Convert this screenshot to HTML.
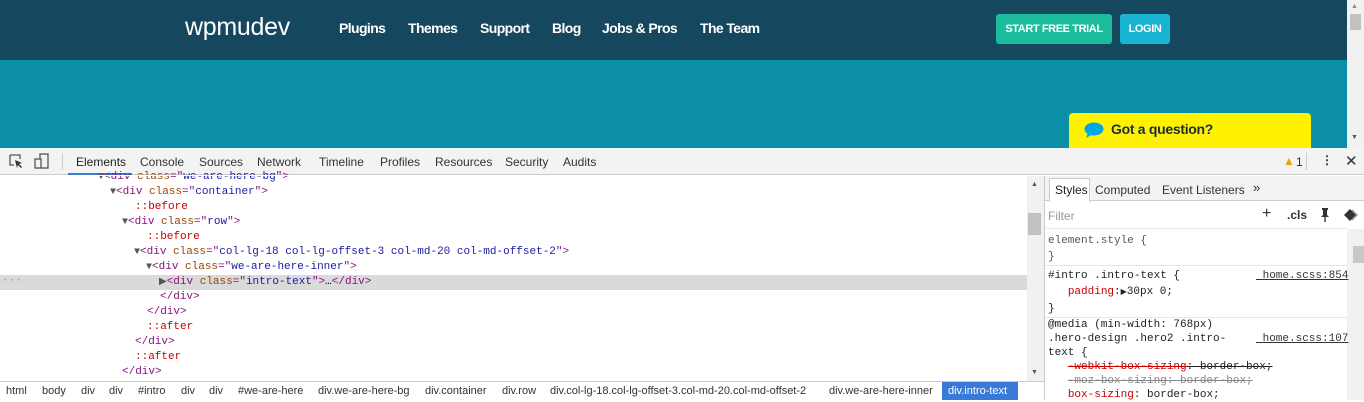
<!DOCTYPE html>
<html><head><style>
*{margin:0;padding:0;box-sizing:border-box}
body{width:1364px;height:400px;overflow:hidden;position:relative;font-family:"Liberation Sans",sans-serif;background:#fff}
.a{position:absolute;white-space:nowrap}
.nav{top:0;left:0;width:1347px;height:60px;background:#15475e}
.hero{top:60px;left:0;width:1347px;height:88px;background:#0a8fa6}
.nl{color:#fff;font-weight:bold;font-size:14px;top:20px;letter-spacing:-0.6px}
.btn{top:14px;height:30px;border-radius:3px;color:#fff;font-weight:bold;font-size:11px;line-height:30px;text-align:center;letter-spacing:-0.4px}
.m{font-family:"Liberation Mono",monospace;font-size:11px}
.t{color:#881280}.at{color:#994500}.v{color:#1a1aa6}.ps{color:#c80000}
.ln{position:absolute;height:15px;line-height:15px}
.tri{color:#555;font-size:10px}
.tb{top:148px;left:0;width:1364px;height:27px;background:#f3f3f3;border-bottom:1px solid #ccc;font-size:12px;color:#333}
.tb span{position:absolute;top:7px}
.bc{font-size:11px;color:#333;top:385px}
</style></head><body>
<div class="a nav"></div>
<div class="a" style="left:185px;top:13px;color:#fff;font-size:25px;letter-spacing:-0.3px">wpmudev</div>
<div class="a nl" style="left:339px">Plugins</div>
<div class="a nl" style="left:408px">Themes</div>
<div class="a nl" style="left:480px">Support</div>
<div class="a nl" style="left:552px">Blog</div>
<div class="a nl" style="left:602px">Jobs &amp; Pros</div>
<div class="a nl" style="left:700px">The Team</div>
<div class="a btn" style="left:996px;width:116px;background:#1abc9c">START FREE TRIAL</div>
<div class="a btn" style="left:1120px;width:50px;background:#19b4d2">LOGIN</div>
<div class="a hero"></div>
<div class="a" style="left:1069px;top:113px;width:242px;height:35px;background:#fff200;border-radius:4px 4px 0 0"></div>
<svg class="a" style="left:1083px;top:121px" width="22" height="18"><ellipse cx="11" cy="8" rx="9.5" ry="6.5" fill="#00a6e8"/><path d="M5 12 L3 17 L10 13Z" fill="#00a6e8"/></svg>
<div class="a" style="left:1111px;top:121px;font-weight:bold;font-size:14px;color:#1a2e3a;letter-spacing:-0.3px">Got a question?</div>
<div class="a" style="left:1347px;top:0;width:17px;height:148px;background:#f1f1f1"></div>
<div class="a" style="left:1350px;top:14px;width:11px;height:16px;background:#c1c1c1"></div>
<div class="a" style="left:1351px;top:3px;font-size:7px;color:#888">▲</div>
<div class="a" style="left:1351px;top:134px;font-size:7px;color:#555">▼</div>

<div class="a tb">
<svg style="position:absolute;left:9px;top:6px" width="14" height="14"><path d="M1 1h10v4M1 1v10h4" fill="none" stroke="#555" stroke-width="1.3"/><path d="M6 6l7 3-3 1 3 3-1 1-3-3-1 3z" fill="#333"/></svg>
<svg style="position:absolute;left:34px;top:5px" width="16" height="16"><rect x="6" y="1" width="8" height="14" fill="none" stroke="#555" stroke-width="1.3"/><rect x="1" y="6" width="6" height="9" fill="#f3f3f3" stroke="#555" stroke-width="1.3"/></svg>
<div style="position:absolute;left:62px;top:5px;width:1px;height:17px;background:#ccc"></div>
<span style="left:76px;color:#222">Elements</span>
<div style="position:absolute;left:68px;top:25px;width:64px;height:2px;background:#3879d9"></div>
<span style="left:140px">Console</span><span style="left:199px">Sources</span><span style="left:257px">Network</span><span style="left:319px">Timeline</span><span style="left:380px">Profiles</span><span style="left:435px">Resources</span><span style="left:505px">Security</span><span style="left:563px">Audits</span>
<span style="left:1283px;color:#e8a600;font-size:12px;top:6px">▲</span><span style="left:1296px;color:#333">1</span>
<div style="position:absolute;left:1306px;top:5px;width:1px;height:17px;background:#ccc"></div>
<span style="left:1321px;font-weight:bold;top:5px">⋮</span>
<span style="left:1345px;font-size:15px;top:4px">✕</span>
</div>

<div class="a" style="left:0;top:275px;width:1027px;height:15px;background:#dadada"></div>
<div class="a m" style="left:2px;top:275px;color:#999;line-height:13px">···</div>
<div class="m">
<div class="ln" style="left:98px;top:170px"><span class="tri">▼</span><span class="t">&lt;div </span><span class="at">class</span><span class="t">="</span><span class="v">we-are-here-bg</span><span class="t">"&gt;</span></div>
<div class="ln" style="left:110px;top:185px"><span class="tri">▼</span><span class="t">&lt;div </span><span class="at">class</span><span class="t">="</span><span class="v">container</span><span class="t">"&gt;</span></div>
<div class="ln ps" style="left:135px;top:200px">::before</div>
<div class="ln" style="left:122px;top:215px"><span class="tri">▼</span><span class="t">&lt;div </span><span class="at">class</span><span class="t">="</span><span class="v">row</span><span class="t">"&gt;</span></div>
<div class="ln ps" style="left:147px;top:230px">::before</div>
<div class="ln" style="left:134px;top:245px"><span class="tri">▼</span><span class="t">&lt;div </span><span class="at">class</span><span class="t">="</span><span class="v">col-lg-18 col-lg-offset-3 col-md-20 col-md-offset-2</span><span class="t">"&gt;</span></div>
<div class="ln" style="left:146px;top:260px"><span class="tri">▼</span><span class="t">&lt;div </span><span class="at">class</span><span class="t">="</span><span class="v">we-are-here-inner</span><span class="t">"&gt;</span></div>
<div class="ln" style="left:159px;top:275px"><span class="tri">▶</span><span class="t">&lt;div </span><span class="at">class</span><span class="t">="</span><span class="v">intro-text</span><span class="t">"&gt;</span>…<span class="t">&lt;/div&gt;</span></div>
<div class="ln t" style="left:160px;top:290px">&lt;/div&gt;</div>
<div class="ln t" style="left:147px;top:305px">&lt;/div&gt;</div>
<div class="ln ps" style="left:147px;top:320px">::after</div>
<div class="ln t" style="left:135px;top:335px">&lt;/div&gt;</div>
<div class="ln ps" style="left:135px;top:350px">::after</div>
<div class="ln t" style="left:122px;top:365px">&lt;/div&gt;</div>
</div>
<div class="a" style="left:0;top:175px;width:1027px;height:1px;background:#fff"></div>
<div class="a" style="left:1027px;top:176px;width:17px;height:205px;background:#f1f1f1"></div>
<div class="a" style="left:1028px;top:213px;width:13px;height:22px;background:#c1c1c1"></div>
<div class="a" style="left:1031px;top:181px;font-size:7px;color:#555">▲</div>
<div class="a" style="left:1031px;top:369px;font-size:7px;color:#555">▼</div>
<div class="a" style="left:0;top:381px;width:1044px;height:1px;background:#ccc"></div>
<div class="a bc" style="left:6px">html</div><div class="a bc" style="left:42px">body</div><div class="a bc" style="left:81px">div</div><div class="a bc" style="left:109px">div</div><div class="a bc" style="left:138px">#intro</div><div class="a bc" style="left:181px">div</div><div class="a bc" style="left:209px">div</div><div class="a bc" style="left:238px">#we-are-here</div><div class="a bc" style="left:318px">div.we-are-here-bg</div><div class="a bc" style="left:425px">div.container</div><div class="a bc" style="left:502px">div.row</div><div class="a bc" style="left:550px">div.col-lg-18.col-lg-offset-3.col-md-20.col-md-offset-2</div><div class="a bc" style="left:829px">div.we-are-here-inner</div>
<div class="a" style="left:942px;top:382px;width:76px;height:18px;background:#3879d9"></div>
<div class="a bc" style="left:948px;color:#fff">div.intro-text</div>

<div class="a" style="left:1044px;top:176px;width:1px;height:224px;background:#ccc"></div>
<div class="a" style="left:1045px;top:176px;width:319px;height:25px;background:#f3f3f3;border-bottom:1px solid #ccc"></div>
<div class="a" style="left:1049px;top:178px;width:41px;height:24px;background:#fff;border:1px solid #ccc;border-bottom:none"></div>
<div class="a" style="left:1055px;top:183px;font-size:12px;color:#222">Styles</div>
<div class="a" style="left:1095px;top:183px;font-size:12px;color:#333">Computed</div>
<div class="a" style="left:1162px;top:183px;font-size:12px;color:#333">Event Listeners</div>
<div class="a" style="left:1253px;top:180px;font-size:13px;color:#333">»</div>
<div class="a" style="left:1048px;top:209px;font-size:12px;color:#999">Filter</div>
<div class="a" style="left:1262px;top:205px;font-size:16px;color:#333">+</div>
<div class="a" style="left:1287px;top:208px;font-size:12px;color:#333;font-weight:bold">.cls</div>
<svg class="a" style="left:1319px;top:207px" width="12" height="16"><rect x="3" y="1" width="6" height="2" fill="#333"/><path d="M4 3h4v5l2 2H2l2-2z" fill="#333"/><rect x="5.3" y="10" width="1.4" height="5" fill="#333"/></svg>
<svg class="a" style="left:1343px;top:208px" width="16" height="14"><path d="M1 7L7 1L13 7L7 13Z" fill="#333"/><path d="M9 2L14 7L9 12" fill="none" stroke="#999" stroke-width="1.5"/></svg>
<div class="a" style="left:1045px;top:228px;width:302px;height:1px;background:#e6e6e6"></div>
<div class="a" style="left:1347px;top:229px;width:17px;height:171px;background:#f1f1f1"></div>
<div class="a" style="left:1353px;top:246px;width:11px;height:17px;background:#c8c8c8"></div>
<div class="a m" style="left:1048px;top:233px;line-height:16px;color:#555">element.style {<br>}</div>
<div class="a" style="left:1045px;top:265px;width:302px;height:1px;background:#e6e6e6"></div>
<div class="a m" style="left:1048px;top:268px;line-height:16px;color:#222">#intro .intro-text {<br>&nbsp;&nbsp;&nbsp;<span style="color:#c80000">padding</span>:<span style="font-size:8px">▶</span>30px 0;<br>}</div>
<div class="a m" style="left:1256px;top:268px;color:#333;text-decoration:underline;line-height:16px">&nbsp;home.scss:854</div>
<div class="a" style="left:1045px;top:317px;width:302px;height:1px;background:#e6e6e6"></div>
<div class="a m" style="left:1048px;top:318px;line-height:14px;color:#222">@media (min-width: 768px)<br>.hero-design .hero2 .intro-<br>text {<br>&nbsp;&nbsp;&nbsp;<s style="color:#c80000">-webkit-box-sizing</s><s>: border-box;</s><br>&nbsp;&nbsp;&nbsp;<s style="color:#888">-moz-box-sizing: border-box;</s><br>&nbsp;&nbsp;&nbsp;<span style="color:#c80000">box-sizing</span>: border-box;</div>
<div class="a m" style="left:1256px;top:332px;color:#333;text-decoration:underline;line-height:14px">&nbsp;home.scss:107</div>
</body></html>
